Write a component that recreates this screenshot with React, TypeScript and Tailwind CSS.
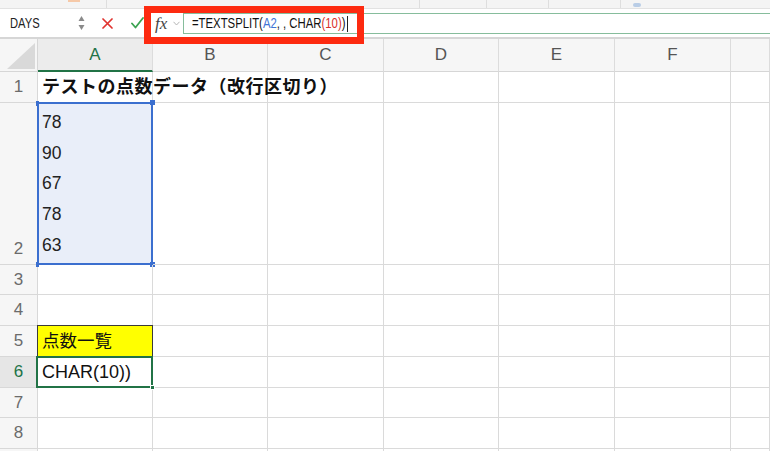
import React from "react";

const FONT = { fontFamily: '"Liberation Sans", "Noto Sans CJK JP", Arial, sans-serif' };

const cols = ["A", "B", "C", "D", "E", "F", ""];
const rowHeights = [31, 162, 30, 31, 31, 31, 30, 31, 30];

function Cell({ children, className = "" }: { children?: React.ReactNode; className?: string }) {
  return (
    <div className={`relative border-r border-b border-[#dadada] ${className}`}>{children}</div>
  );
}

export default function App() {
  return (
    <div className="relative w-[770px] h-[451px] overflow-hidden bg-white text-[#111]" style={FONT}>
      {/* toolbar remnant strip */}
      <div className="flex h-[9px] bg-[#f4f4f4] border-b border-[#e2e2e2]">
        <div className="w-[68px]" />
        <div className="w-[12px] h-[2px] bg-[#f6c9a8]" />
        <div className="w-[27px] border-r border-[#dedede]" />
        <div className="w-[313px] border-r border-[#dedede]" />
        <div className="w-[67px] border-r border-[#dedede]" />
        <div className="w-[62px] border-r border-[#dedede]" />
        <div className="w-[72px] border-r border-[#dedede]" />
        <div className="ml-[12px] mt-[3px] w-[8px] h-[4px] rounded-sm bg-[#b9cde6]" />
      </div>

      {/* formula bar */}
      <div className="flex h-[28px] items-center bg-white">
        <div className="w-[90px] h-full flex items-center justify-between pl-[10px] pr-[5px]">
          <span className="inline-block text-[14px] text-[#222] scale-x-[0.8] origin-left">DAYS</span>
          <svg width="7" height="16" viewBox="0 0 7 16">
            <path d="M3.5 1 L6.5 6 L0.5 6 Z" fill="#8a8a8a" />
            <path d="M3.5 15 L6.5 10 L0.5 10 Z" fill="#8a8a8a" />
          </svg>
        </div>
        <svg className="ml-[12px]" width="11" height="11" viewBox="0 0 11 11">
          <path d="M1 1 L10 10 M10 1 L1 10" stroke="#e0332f" strokeWidth="1.7" strokeLinecap="round" />
        </svg>
        <svg className="ml-[18px]" width="13" height="12" viewBox="0 0 13 12">
          <path d="M1 6.5 L4.5 10.5 L12 1" stroke="#3ba351" strokeWidth="1.8" fill="none" strokeLinecap="round" strokeLinejoin="round" />
        </svg>
        <span
          className="ml-[11px] text-[17px] italic text-[#444] leading-none"
          style={{ fontFamily: '"Liberation Serif", "DejaVu Serif", serif' }}
        >
          fx
        </span>
        <svg className="ml-[6px]" width="7" height="5" viewBox="0 0 7 5">
          <path d="M0.5 0.8 L3.5 4 L6.5 0.8" stroke="#b5b5b5" strokeWidth="1" fill="none" />
        </svg>
        <div className="ml-[3px] flex-1 h-[21px] mt-[1px] border-y border-l border-[#86bd9c] flex items-center pl-[8px]">
          <span className="inline-block text-[14px] text-[#111] whitespace-pre scale-x-[0.81] origin-left">
            =TEXTSPLIT(<span className="text-[#3f74d6]">A2</span>, , CHAR<span className="text-[#d9302a]">(10)</span>)
          </span>
          <span className="-ml-[35px] w-[1px] h-[16px] bg-[#222]" />
        </div>
      </div>
      <div className="h-[2px] bg-[#d6d6d6]" />

      {/* sheet grid */}
      <div
        className="grid"
        style={{
          gridTemplateColumns: "38px 115px 115px 116px 115px 116px 116px 1fr",
          gridTemplateRows: `33px ${rowHeights.map((h) => h + "px").join(" ")}`,
        }}
      >
        {/* header row */}
        <div className="relative bg-[#f6f6f6] border-r border-b border-[#d6d6d6] flex items-end justify-end pr-[2px] pb-[2px]">
          <svg width="28" height="26" viewBox="0 0 28 26">
            <path d="M28 0 L28 26 L0 26 Z" fill="#d9d9d9" />
          </svg>
        </div>
        {cols.map((c, i) => (
          <div
            key={i}
            className={`flex items-center justify-center text-[17px] border-r border-[#dcdcdc] ${
              i === 0
                ? "bg-[#ececec] text-[#217346] border-b-2 border-b-[#217346]"
                : "bg-[#f6f6f6] text-[#555] border-b border-b-[#d6d6d6]"
            }`}
          >
            {c}
          </div>
        ))}

        {rowHeights.map((_, r) => {
          const n = r + 1;
          const rowHeader = (
            <div
              key={`h${n}`}
              className={`flex justify-center border-r border-b border-[#d8d8d8] text-[17px] ${
                n === 2 ? "items-end pb-[3px]" : "items-center"
              } ${n === 6 ? "bg-[#e6e6e6] text-[#217346]" : "bg-[#f6f6f6] text-[#6b6b6b]"}`}
            >
              {n <= 8 ? n : ""}
            </div>
          );
          const cells = cols.map((_, ci) => {
            const key = `c${n}-${ci}`;
            if (ci === 0 && n === 1) {
              return (
                <Cell key={key} className="overflow-visible">
                  <div className="absolute left-[4px] top-0 h-full flex items-center whitespace-nowrap text-[18px] tracking-[0.5px] font-bold z-10">
                    テストの点数データ（改行区切り）
                  </div>
                </Cell>
              );
            }
            if (ci === 0 && n === 2) {
              return (
                <Cell key={key} className="bg-[#e9eef9]">
                  <div className="flex flex-col pl-[4px] pt-[4px] text-[17.5px] text-[#222]">
                    {["78", "90", "67", "78", "63"].map((v, k) => (
                      <div key={k} className="h-[30.6px] flex items-center">
                        {v}
                      </div>
                    ))}
                  </div>
                  <div className="absolute -left-[1px] -top-[1px] -right-[1px] -bottom-[1px] border-2 border-[#3b6fcf] pointer-events-none" />
                  <div className="absolute -left-[2px] -top-[2px] w-[3px] h-[5px] bg-[#3b6fcf]" />
                  <div className="absolute -right-[3px] -top-[3px] w-[5px] h-[5px] bg-[#3b6fcf]" />
                  <div className="absolute -left-[2px] -bottom-[3px] w-[3px] h-[5px] bg-[#3b6fcf]" />
                  <div className="absolute -right-[3px] -bottom-[3px] w-[5px] h-[5px] bg-[#3b6fcf]" />
                </Cell>
              );
            }
            if (ci === 0 && n === 5) {
              return (
                <Cell key={key} className="bg-[#ffff00]">
                  <div className="absolute -left-[1px] -top-[1px] -right-[1px] -bottom-[1px] border border-[#3a3a3a]" />
                  <div className="h-full flex items-center pl-[4px] text-[17.5px]">点数一覧</div>
                </Cell>
              );
            }
            if (ci === 0 && n === 6) {
              return (
                <Cell key={key}>
                  <div className="h-full flex items-center pl-[4px] text-[18px] text-[#111]">CHAR(10))</div>
                  <div className="absolute -left-[2px] -top-[1px] -right-[1px] -bottom-[1px] border-2 border-[#217346] z-10" />
                  <div className="absolute -right-[3px] -bottom-[3px] w-[5px] h-[5px] bg-[#217346] border border-white z-20" />
                </Cell>
              );
            }
            return <Cell key={key} />;
          });
          return [rowHeader, ...cells];
        })}
      </div>

      {/* red annotation box */}
      <div className="absolute left-[144px] top-[6px] w-[220px] h-[38px] border-[7px] border-[#fd2a10]" />
    </div>
  );
}
